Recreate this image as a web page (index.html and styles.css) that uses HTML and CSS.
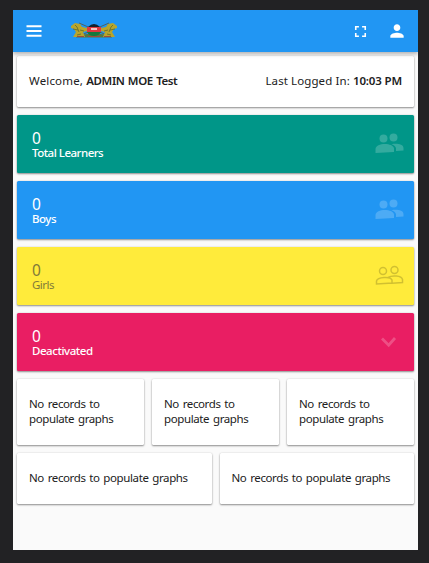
FILE: index.html
```html
<!DOCTYPE html>
<html lang="en">
<head>
<meta charset="utf-8">
<title>Dashboard</title>
<link rel="stylesheet" href="styles.css">
</head>
<body>
<div class="app">
  <header class="toolbar">
    <svg class="menu" viewBox="0 0 24 24"><path d="M3 19h18v-2.400H3zm0-5.800h18v-2.400H3zM3 5v2.400h18V5z"/></svg>
    <svg class="crest" viewBox="0 0 48 16">
      <path d="M9 1l30 13M39 1L9 14" fill="none" stroke="#4f625f"/>
      <path d="M6 14Q24 9 42 14v1.500H6z" fill="#58763f"/>
      <g>
        <path d="M1 4l4-3 5 1 2 3 5 1v3l-4 1 2 5H3l3-5-2-3-3-1z" fill="#b8a52c"/>
        <path d="M5 3l2 2 2 5M3 7l5 1M10 8l4 1M7 13l4-1" fill="none" stroke="#5d6a2c" stroke-width=".8"/>
      </g>
      <g transform="matrix(-1 0 0 1 48 0)">
        <path d="M1 4l4-3 5 1 2 3 5 1v3l-4 1 2 5H3l3-5-2-3-3-1z" fill="#b8a52c"/>
        <path d="M5 3l2 2 2 5M3 7l5 1M10 8l4 1M7 13l4-1" fill="none" stroke="#5d6a2c" stroke-width=".8"/>
      </g>
      <path d="M18 5q6-6 12 0z" fill="#14212a"/>
      <path d="M17 5h14v5H17z" fill="#e0383f"/>
      <path d="M21 6h6v2h-6z" fill="#f3c7c6"/>
      <path d="M17 10h14q-2 4-7 4t-7-4z" fill="#16783c"/>
      <path d="M7 14.500h7m20 0h7m-23 0h12" stroke="#a34a36"/>
    </svg>
    <span class="spacer"></span>
    <svg class="full" viewBox="0 0 24 24"><path d="M5 5h5v2H7v3H5V5zm9 0h5v5h-2V7h-3V5zm3 9h2v5h-5v-2h3v-3zm-7 3v2H5v-5h2v3h3z"/></svg>
    <svg class="person" viewBox="0 0 24 24"><path d="M12 12c2.210 0 4-1.790 4-4s-1.790-4-4-4-4 1.790-4 4 1.790 4 4 4zm0 2c-2.670 0-8 1.340-8 4v2h16v-2c0-2.660-5.330-4-8-4z"/></svg>
  </header>
  <main class="content">
    <section class="card welcome">
      <p class="hello">Welcome, <b class="name">ADMIN MOE Test</b></p>
      <p class="login">Last Logged In: <b class="time">10:03 PM</b></p>
    </section>
    <section class="card stat teal">
      <div><div class="count">0</div><div class="label learners">Total Learners</div></div>
      <svg class="people" viewBox="0 0 29 21"><circle cx="8.500" cy="5.500" r="4"/><circle cx="18.500" cy="4.500" r="4"/><path d="M.5 20v-3.500c0-7 17.500-7 18.500-1v3.500zM16.500 11.200c5-1 12-.2 12 4v2.300l-7.500.5v-2.500c0-2-2-3.500-4.500-4.300z"/></svg>
    </section>
    <section class="card stat blue">
      <div><div class="count">0</div><div class="label boys">Boys</div></div>
      <svg class="people" viewBox="0 0 29 21"><circle cx="8.500" cy="5.500" r="4"/><circle cx="18.500" cy="4.500" r="4"/><path d="M.5 20v-3.500c0-7 17.500-7 18.500-1v3.500zM16.500 11.200c5-1 12-.2 12 4v2.300l-7.500.5v-2.500c0-2-2-3.500-4.500-4.300z"/></svg>
    </section>
    <section class="card stat yellow">
      <div><div class="count">0</div><div class="label girls">Girls</div></div>
      <svg class="people outline" viewBox="0 0 29 21"><circle cx="8" cy="6" r="3.500"/><circle cx="19.500" cy="5" r="3.500"/><path d="M1.500 19v-3c1-4 14-5 15.500-1v3zM13 12.500c4-2.500 13.500-2 14.500 2v3l-10.500.7"/></svg>
    </section>
    <section class="card stat pink">
      <div><div class="count">0</div><div class="label deactivated">Deactivated</div></div>
      <svg class="people chevron" viewBox="0 0 29 21"><path d="M7 7.500l6.700 6.700L20 7"/></svg>
    </section>
    <section class="row three">
      <div class="card graph">No records to populate graphs</div>
      <div class="card graph">No records to populate graphs</div>
      <div class="card graph">No records to populate graphs</div>
    </section>
    <section class="row two">
      <div class="card graph">No records to populate graphs</div>
      <div class="card graph">No records to populate graphs</div>
    </section>
  </main>
</div>
</body>
</html>
```
FILE: styles.css
```css
* { box-sizing: border-box; }
body {
  margin: 0;
  height: 563px;
  padding: 10px 11px 13px 13px;
  background: #222224;
  font: 11.500px/15px "Noto Sans", sans-serif;
  color: #212121;
  overflow: hidden;
}
p { margin: 0; }
.app { height: 540px; background: #fafafa; overflow: hidden; }
.toolbar {
  position: relative;
  height: 42px;
  display: flex;
  align-items: center;
  padding: 0 11px 0 11px;
  background: #2196f3;
  box-shadow: 0 2px 4px rgba(0,0,0,.3);
  fill: #fff;
}
.menu { width: 20px; height: 20px; }
.crest { width: 48px; height: 16px; margin-left: 26px; margin-top: -2px; filter: blur(.6px); }
.spacer { flex: 1; }
.full { width: 19px; height: 19px; margin-right: 17px; }
.person { width: 20px; height: 20px; }
.content { display: flex; flex-direction: column; gap: 8px; padding: 4px; }
.card {
  background: #fff;
  border-radius: 1.500px;
  box-shadow: 0 1px 2px rgba(0,0,0,.42), 0 0 2px rgba(0,0,0,.12);
}
.welcome {
  height: 51px;
  display: flex;
  align-items: center;
  justify-content: space-between;
  padding: 0 12px 2px;
  white-space: nowrap;
}
b { font-weight: 600; }
.hello { letter-spacing: .17px; }
.name { letter-spacing: -.4px; word-spacing: .8px; }
.login { letter-spacing: .1px; }
.time { letter-spacing: -.15px; }
.stat {
  height: 58px;
  display: flex;
  justify-content: space-between;
  padding: 15px 10px 0 15px;
  color: #fff;
}
.count { font-size: 15.500px; line-height: 17px; }
.label { font-size: 11.500px; line-height: 11px; font-weight: 500; letter-spacing: -.5px; }
.deactivated { letter-spacing: -.45px; }
.girls { font-weight: 400; }
.teal { background: #009688; }
.blue { background: #2196f3; }
.yellow { background: #ffeb3b; color: #817a39; }
.pink { background: #e91e63; }
.people { width: 29px; height: 21px; margin-top: 3px; fill: rgba(255,255,255,.2); }
.outline { fill: none; stroke: rgba(0,0,0,.18); stroke-width: 1.500; }
.chevron { fill: none; stroke: rgba(255,255,255,.22); stroke-width: 2.800; }
.row { display: grid; gap: 8px; }
.three { grid-template-columns: repeat(3, minmax(0, 1fr)); }
.two { grid-template-columns: repeat(2, minmax(0, 1fr)); }
.graph { padding: 17px 12px; letter-spacing: -.38px; word-spacing: 1.100px; }
.three .graph { height: 66px; }
.two .graph { height: 51px; white-space: nowrap; }
```
